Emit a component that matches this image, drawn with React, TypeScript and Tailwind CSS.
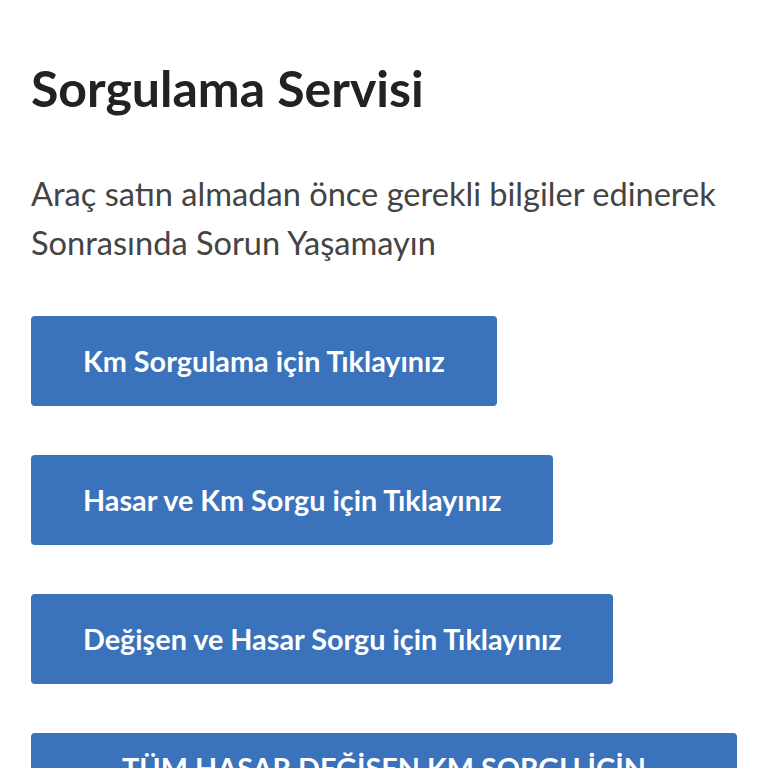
import React from "react";

const buttons = [
  "Km Sorgulama için Tıklayınız",
  "Hasar ve Km Sorgu için Tıklayınız",
  "Değişen ve Hasar Sorgu için Tıklayınız",
];

export default function App() {
  return (
    <div
      className="min-h-[768px] bg-white px-[31px] pt-[58px] pb-[40px]"
      style={{ fontFamily: "Lato, 'Noto Sans', sans-serif" }}
    >
      <h1 className="text-[50px] font-bold leading-[60px] text-[#222222]">
        Sorgulama Servisi
      </h1>
      <p className="mt-[51px] text-[32.6px] leading-[49px] text-[#444444]">
        Araç satın almadan önce gerekli bilgiler edinerek
        <br />
        Sonrasında Sorun Yaşamayın
      </p>
      <div className="mt-[49px] flex flex-col items-start gap-[49px]">
        {buttons.map((b) => (
          <button
            key={b}
            className="h-[90px] rounded-[4px] bg-[#3a72bb] px-[52px] text-[28.8px] font-bold leading-[44px] text-white"
          >
            {b}
          </button>
        ))}
        <button className="w-[706px] rounded-[4px] bg-[#3a72bb] px-[52px] py-[13px] text-[28.8px] font-bold leading-[44px] text-white">
          TÜM HASAR DEĞİŞEN KM SORGU İÇİN TIKLAYINIZ
        </button>
      </div>
    </div>
  );
}
